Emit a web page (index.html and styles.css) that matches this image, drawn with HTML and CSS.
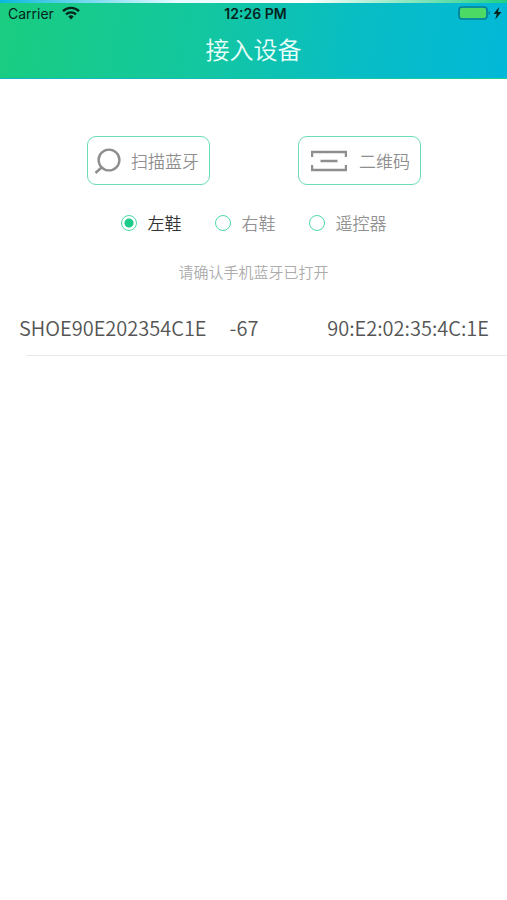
FILE: index.html
```html
<!DOCTYPE html>
<html lang="zh-CN">
<head>
    <meta charset="UTF-8">
    <meta name="viewport" content="width=device-width, initial-scale=1.0">
    <title>接入设备</title>
    <link rel="stylesheet" href="styles.css">
</head>
<body>
    <header class="header">
        <!-- Status bar -->
        <div class="status-bar">
            <div class="carrier">
                <span>Carrier</span>
                <svg width="18" height="14" viewBox="0 0 18 14" aria-hidden="true">
                    <path d="M1 5.200a11.400 11.400 0 0 1 16 0" fill="none" stroke="#06231c" stroke-width="2.400"/>
                    <path d="M4 8.400a7.200 7.200 0 0 1 10 0" fill="none" stroke="#06231c" stroke-width="2.200"/>
                    <path d="M6.300 10.500a3.900 3.900 0 0 1 5.400 0L9 13.400z" fill="#06231c"/>
                </svg>
            </div>
            <div class="clock">12:26 PM</div>
            <div class="power">
                <svg width="45" height="14" viewBox="0 0 45 14" aria-hidden="true">
                    <rect x="1" y="1" width="28" height="12" rx="3" fill="none" stroke="#087f90" stroke-width="1.600"/>
                    <rect x="2" y="2" width="26" height="10" rx="2" fill="#4cd964"/>
                    <path d="M30.500 5c2 .6 2 3.400 0 4z" fill="#087f90"/>
                    <path d="M41 1L35.500 8h3.300l-1.600 5.500 6.300-7.500h-3.400z" fill="#06231c"/>
                </svg>
            </div>
        </div>
        <h1>接入设备</h1>
    </header>

    <main>
        <!-- Ways to add a device -->
        <div class="actions">
            <button type="button" class="action scan">
                <svg width="28" height="26" viewBox="0 0 28 26" aria-hidden="true">
                    <circle cx="15" cy="12" r="10.400" fill="none" stroke="#8e8e8e" stroke-width="2.400"/>
                    <path d="M7.500 19.500L1.500 25" stroke="#8e8e8e" stroke-width="2.400"/>
                </svg>
                扫描蓝牙
            </button>
            <button type="button" class="action qrcode">
                <svg width="36" height="22" viewBox="0 0 36 22" aria-hidden="true">
                    <path d="M1 7V2h34v5M1 15v5h34v-5M9.500 11h17" fill="none" stroke="#8e8e8e" stroke-width="2.400"/>
                </svg>
                二维码
            </button>
        </div>

        <!-- Device type -->
        <form class="device-types">
            <label><input type="radio" name="device" value="left" checked><span>左鞋</span></label>
            <label><input type="radio" name="device" value="right"><span>右鞋</span></label>
            <label><input type="radio" name="device" value="remote"><span>遥控器</span></label>
        </form>

        <p class="hint">请确认手机蓝牙已打开</p>

        <!-- Devices found -->
        <ul class="devices">
            <li>
                <span class="name">SHOE90E202354C1E</span>
                <span class="rssi">-67</span>
                <span class="mac">90:E2:02:35:4C:1E</span>
            </li>
        </ul>
    </main>
</body>
</html>
```
FILE: styles.css
```css
* {
    box-sizing: border-box;
}

body {
    margin: 0;
    background-color: #fff;
    color: #555;
    font-family: "Noto Sans CJK SC", sans-serif;
    font-weight: 350;
}

/* Header: thin strips above and below the main gradient */
.header {
    background:
        linear-gradient(90deg, #08b8dc, #e8fbff 35%, #fff 60%, #1fcf85) top / 100% 3px no-repeat,
        linear-gradient(90deg, #10b5c5, #12c0b0 50%, #1fcf95) bottom / 100% 1px no-repeat,
        linear-gradient(100deg, #1acd80, #13c7a0 40%, #08bdc4 70%, #02b8d8);
    padding: 3px 0 11px;
}

.status-bar {
    display: grid;
    grid-template-columns: 1fr auto 1fr;
    align-items: center;
    height: 20px;
    padding: 0 4px 0 8px;
    color: #06231c;
    font-family: Inter, sans-serif;
    font-size: 14px;
    font-weight: 400;
}

.carrier {
    display: flex;
    align-items: center;
    gap: 8px;
}

.clock {
    font-weight: 600;
}

.power {
    display: flex;
    justify-content: flex-end;
}

h1 {
    margin: 7px 0 0;
    color: #e8fffa;
    font-size: 24px;
    font-weight: 350;
    line-height: 38px;
    text-align: center;
}

/* Buttons */
.actions {
    display: flex;
    justify-content: space-around;
    padding: 57px 42px 0 43px;
}

.action {
    display: flex;
    align-items: center;
    width: 123px;
    height: 49px;
    padding: 0 6px;
    border: 1px solid #6bdcb8;
    border-radius: 9px;
    background-color: #fff;
    color: #8e8e8e;
    font-family: inherit;
    font-size: 17px;
    font-weight: 350;
    white-space: nowrap;
}

.scan {
    gap: 9px;
}

.qrcode {
    gap: 12px;
    padding-left: 12px;
}

/* Radio buttons */
.device-types {
    display: flex;
    justify-content: center;
    gap: 33px;
    margin-top: 25px;
}

.device-types label {
    display: flex;
    align-items: center;
    gap: 11px;
    color: #929292;
    font-size: 17px;
    line-height: 26px;
}

.device-types input {
    appearance: none;
    width: 16px;
    height: 16px;
    margin: 0;
    border: 1px solid #4fd9aa;
    border-radius: 50%;
}

.device-types input:checked {
    background: radial-gradient(circle, #1acb8a 4px, #fff 5px);
}

.device-types input:checked + span {
    color: #333;
}

.hint {
    margin: 25px 0 0;
    color: #acacac;
    font-size: 15px;
    line-height: 22px;
    text-align: center;
}

/* Device list */
.devices {
    margin: 29px 0 0;
    padding: 0;
    list-style: none;
}

.devices li {
    display: flex;
    padding: 0 18px 12px 19px;
    background: linear-gradient(#e8e8e8, #e8e8e8) 26px 100% / 100% 1px no-repeat;
    font-size: 20px;
    line-height: 32px;
}

.rssi {
    margin-left: 23px;
}

.mac {
    margin-left: auto;
}
```
